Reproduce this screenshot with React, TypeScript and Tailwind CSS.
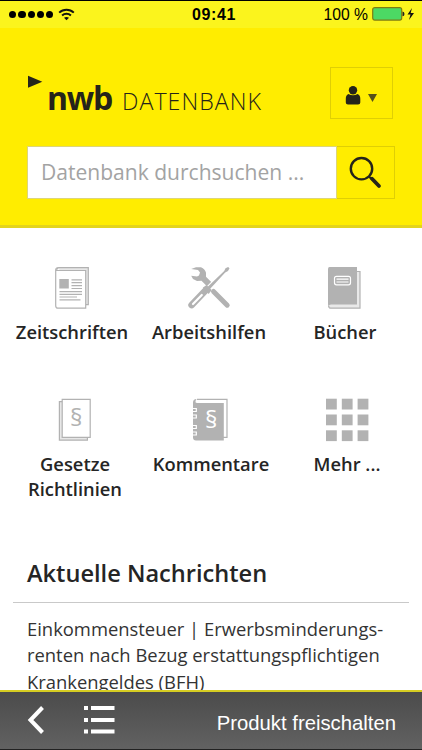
import React from 'react';

const sans = "font-['Open_Sans','Noto_Sans',sans-serif]";
const system = "font-['Liberation_Sans',Arial,sans-serif]";

const StatusBar: React.FC = () => (
  <div className={`flex h-7 shrink-0 items-center border-t border-black bg-[#fbf41d] text-black ${system}`}>
    <div className="flex w-[192px] items-center pl-[9px]">
      <div className="flex gap-[2px]">
        {[0, 1, 2, 3, 4].map((dot) => (
          <span key={dot} className="size-[7.25px] rounded-full bg-black" />
        ))}
      </div>
      <svg className="ml-[5px]" width="17" height="13" viewBox="0 0 17 13" fill="none" stroke="#111" strokeWidth="2">
        <path d="M1.2 4.6a10.5 10.5 0 0 1 14.6 0" />
        <path d="M4.1 7.5a6.4 6.4 0 0 1 8.8 0" />
        <path d="M8.5 12.3 6 9.8q2.5-1.6 5 0z" fill="#111" stroke="none" />
      </svg>
    </div>
    <span className="mt-px w-[44px] text-[16px] font-bold tracking-[0.6px] whitespace-nowrap">09:41</span>
    <div className="flex flex-1 items-center justify-end pr-[7px]">
      <span className="mt-px text-[15.7px] whitespace-nowrap">100 %</span>
      <svg className="ml-[4px]" width="43" height="14" viewBox="0 0 43 14">
        <rect x="0.7" y="0.7" width="29" height="12.4" rx="2" fill="#4cd964" stroke="#7f7b12" strokeWidth="1.2" />
        <path d="M30.5 4.5q2 .3 2 2.4t-2 2.4z" fill="#222" />
        <path d="M40 1 35.5 7.5h3L37 13l5-7h-3.3z" fill="#111" />
      </svg>
    </div>
  </div>
);

const Header: React.FC = () => (
  <header className="h-[200px] shrink-0 border-b-[3px] border-[#e3d41b] bg-[#ffed00] pl-[27px]">
    <div className="flex h-[118px] items-start">
      <svg className="mt-[47px] shrink-0" width="16" height="14" viewBox="0 0 16 14">
        <path d="M1 .8 15.3 6.7 1 12.8z" fill="#25241a" />
      </svg>
      <h1 className={`mt-[48px] ml-[4px] flex w-[283px] items-baseline whitespace-nowrap text-[#25241a] ${sans}`}>
        <span className="w-[75px] text-[32px] leading-[44px] font-bold tracking-[-1.2px]">nwb</span>
        <span className="text-[23.2px] leading-[44px] font-light tracking-[1.05px]">DATENBANK</span>
      </h1>
      <button className="mt-[39px] flex h-[52px] w-[63px] shrink-0 items-center justify-center gap-[7px] border border-[#dfcf05] pt-[5px] pr-[2px]">
        <svg width="16" height="19" viewBox="0 0 16 19" fill="#25241a">
          <circle cx="8" cy="4.3" r="4.2" />
          <path d="M3.4 8Q8 10.6 12.6 8q2.7 1 2.7 4.8v3.6q0 2-2.2 2H3q-2.2 0-2.2-2v-3.6Q.8 9 3.4 8z" />
        </svg>
        <svg className="mt-[5px]" width="9" height="8" viewBox="0 0 9 8">
          <path d="M0 0h9L4.5 8z" fill="#56511a" />
        </svg>
      </button>
    </div>
    <div className="flex">
      <div className="flex h-[53px] w-[310px] items-center border border-[#ddd57a] bg-white pl-[13px]">
        <span className={`text-[21.05px] whitespace-nowrap text-[#a3a3a3] ${sans}`}>Datenbank durchsuchen ...</span>
      </div>
      <button className="flex h-[53px] w-[58px] items-center justify-center border border-l-0 border-[#dfcf05] pr-[2px]">
        <svg width="34" height="34" viewBox="0 0 34 34" fill="none" stroke="#25241a">
          <circle cx="13.5" cy="12.7" r="10.7" strokeWidth="2.4" />
          <path d="m21.2 20.7 2.5 2.5" strokeWidth="2" />
          <path d="m24 22.7 7 7.3" strokeWidth="3.8" strokeLinecap="round" />
        </svg>
      </button>
    </div>
  </header>
);

const MagazineIcon: React.FC = () => (
  <svg width="44" height="44" viewBox="0 0 44 44" fill="none" stroke="#b2b2b2" strokeWidth="1.2">
    <path d="M8 1.7h30.3v37H36" fill="#e7e7e7" />
    <path d="M6 4.5h29.7v37.7H8q-2.3 0-2.3-2.5V4q0-2.3 2.8-2.3" fill="#fff" />
    <path d="M6 4.5 8 2" />
    <rect x="9.3" y="13" width="9.5" height="9.5" fill="#b2b2b2" stroke="none" />
    <path d="M21.5 13.8H32M21.5 16.7H32M21.5 19.6H32M21.5 22.5H32M9.5 25.6H32M9.5 28.3H32M9.5 31H27M9.5 33.8h21" />
  </svg>
);

const ToolsIcon: React.FC = () => (
  <svg width="44" height="44" viewBox="0 0 44 44">
    <path d="M4.2 3 9 1.2h5q4 1.5 5 5.5v4l6 6-4 4.5-6.5-6.5-4.5.3-4-2-1.8-3.3 5.8.8 2-1 1-3-2-2.5z" fill="#b2b2b2" />
    <path d="m26.5 25.5 13.7 13.7" stroke="#b2b2b2" strokeWidth="5" strokeLinecap="round" />
    <path d="M21 22 40 3" stroke="#fff" strokeWidth="4" />
    <path d="m20.5 21 16.7-16 1.3-2.7 2.6-1.4 1.4 1.3L41 5l-2.8 1.4-15.7 17z" fill="#b2b2b2" />
    <path d="M18.5 24.5 4.7 39" stroke="#b2b2b2" strokeWidth="6.8" strokeLinecap="round" />
    <path d="m15.8 21.7 3.7-2.6 5.2 5-3 3.8z" fill="#b2b2b2" />
    <path d="M14.8 29 6 38" stroke="#fff" strokeWidth="2.2" strokeLinecap="round" />
  </svg>
);

const BookIcon: React.FC = () => (
  <svg width="44" height="44" viewBox="0 0 44 44">
    <path d="M33 5.5h4v36.7H8q-2.4 0-2.4-2.5" fill="#e9e9e9" stroke="#b2b2b2" strokeWidth="1.2" />
    <path d="M6.5 1H34v37.5H8q-2 0-2.3 1.5Q5 40 5 38V3q0-2 1.5-2z" fill="#b2b2b2" />
    <rect x="11.5" y="10.3" width="16" height="8.5" rx="2" fill="none" stroke="#fff" strokeWidth="1.2" />
    <path d="M13.5 13.2h12M13.5 16h12" stroke="#fff" strokeWidth="1.2" />
  </svg>
);

const LawIcon: React.FC = () => (
  <svg width="44" height="44" viewBox="0 0 44 44">
    <path d="M6.4 3.6h28v38.6h-28z" fill="#e7e7e7" stroke="#b2b2b2" strokeWidth="1.2" />
    <path d="M9.2 1.3h28v38h-28z" fill="#fff" stroke="#b2b2b2" strokeWidth="1.2" />
    <text x="23.3" y="27.8" textAnchor="middle" fontSize="24.5" fill="#b2b2b2" className={sans}>§</text>
  </svg>
);

const CommentaryIcon: React.FC = () => (
  <svg width="44" height="44" viewBox="0 0 44 44">
    <path d="M8 1.3h30v38h-5" fill="#fff" stroke="#b2b2b2" strokeWidth="1.2" />
    <path d="M7.5 1Q4 1 4 4.5v35Q4 42.5 7 42.5h27.8V5H8q-2-.2-1.5-2z" fill="#b2b2b2" />
    <path d="M3.5 10.5H7.3v3H3.5M3.5 17H7.3v3H3.5M3.5 27.5H7.3v3H3.5M3.5 34H7.3v3H3.5" fill="none" stroke="#fff" strokeWidth="1.2" />
    <text x="22.3" y="29.8" textAnchor="middle" fontSize="24.5" fill="#fff" className={sans}>§</text>
  </svg>
);

const MoreIcon: React.FC = () => (
  <svg width="44" height="44" viewBox="0 0 44 44" fill="#b2b2b2">
    {[0.7, 16.5, 32.3].map((y) =>
      [1, 16.8, 32.6].map((x) => <rect key={`${x}-${y}`} x={x} y={y} width="10.8" height="10.8" />)
    )}
  </svg>
);

interface TileProps {
  icon: React.ReactNode;
  label: React.ReactNode;
  className?: string;
}

const Tile: React.FC<TileProps> = ({ icon, label, className = '' }) => (
  <div className={`flex h-[132px] flex-col items-center ${className}`}>
    {icon}
    <span className={`mt-[9.4px] text-center text-[18.35px] leading-[25px] font-semibold whitespace-nowrap text-[#252525] ${sans}`}>
      {label}
    </span>
  </div>
);

const App: React.FC = () => (
  <div className="flex h-[750px] w-[422px] flex-col overflow-hidden bg-white">
    <StatusBar />
    <Header />
    <main className="min-h-0 flex-1 overflow-hidden">
      <div className="grid grid-cols-[144px_130px_144px] pt-[38px]">
        <Tile icon={<MagazineIcon />} label="Zeitschriften" />
        <Tile icon={<ToolsIcon />} label="Arbeitshilfen" />
        <Tile icon={<BookIcon />} label="Bücher" className="pr-[2px]" />
        <Tile icon={<LawIcon />} label={<>Gesetze<br />Richtlinien</>} className="pl-[6px]" />
        <Tile icon={<CommentaryIcon />} label="Kommentare" className="pl-[4px]" />
        <Tile icon={<MoreIcon />} label="Mehr ..." className="pl-[2px]" />
      </div>
      <section className={`mx-[13px] ${sans}`}>
        <h2 className="h-[73px] border-b border-[#c9c9c9] pt-[27px] pl-[14px] text-[23.6px] leading-8 font-semibold text-[#252525]">
          Aktuelle Nachrichten
        </h2>
        <p className="pt-[13px] pl-[14px] text-[18.4px] leading-[26.4px] whitespace-nowrap text-[#333]">
          Einkommensteuer | Erwerbsminderungs-<br />
          renten nach Bezug erstattungspflichtigen<br />
          Krankengeldes (BFH)
        </p>
      </section>
    </main>
    <footer className={`flex h-[60px] shrink-0 items-center border-t-2 border-b border-t-[#d5cc22] border-b-[#222] bg-linear-to-b from-[#4b4b4b] to-[#626262] pl-[27px] ${system}`}>
      <svg className="mb-[2px]" width="18" height="28" viewBox="0 0 18 28" fill="none" stroke="#fff" strokeWidth="4">
        <path d="M15.5 1.5 3.5 14l12 12.5" />
      </svg>
      <svg className="mb-px ml-[38px]" width="32" height="28" viewBox="0 0 32 28" fill="#fff">
        <path d="M1 0h4v4H1zM8 0h23.5v4H8zM1 12h4v4H1zM8 12h23.5v4H8zM1 23.5h4v4H1zM8 23.5h23.5v4H8z" />
      </svg>
      <span className="mt-[5px] ml-auto pr-[26px] text-[20.3px] whitespace-nowrap text-white">Produkt freischalten</span>
    </footer>
  </div>
);

export default App;
